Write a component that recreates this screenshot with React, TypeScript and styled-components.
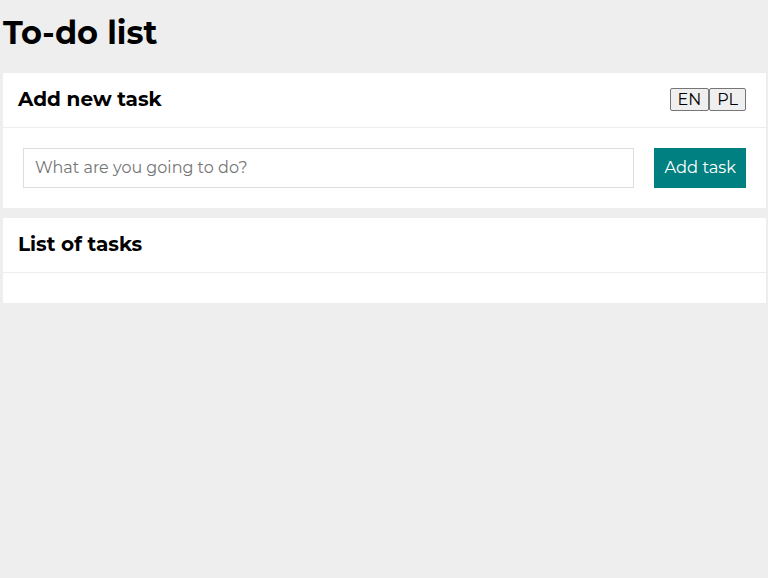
import React from "react";
import styled, { createGlobalStyle } from "styled-components";

const Global = createGlobalStyle`
  html, body { margin: 0; padding: 0; background: #eeeeee; }
  body { font-family: Montserrat, Inter, "DejaVu Sans", sans-serif; color: #000; }
  * { box-sizing: border-box; }
`;

const Page = styled.main`
  padding: 0 2px 0 3px;
  display: flex;
  flex-direction: column;
  gap: 10px;
`;

const Title = styled.h1`
  margin: 13px 0 10px;
  font-size: 32px;
  line-height: 40px;
  font-weight: 700;
`;

const Section = styled.section`
  background: #fff;
  display: flex;
  flex-direction: column;
`;

const SectionHeader = styled.header`
  display: flex;
  align-items: center;
  justify-content: space-between;
  height: 55px;
  padding: 0 20px 2px 15px;
  border-bottom: 1px solid #eeeeee;
`;

const SectionTitle = styled.h2`
  margin: 0;
  font-size: 20px;
  font-weight: 700;
  line-height: 24px;
`;

const LangGroup = styled.div`
  display: flex;
`;

const LangButton = styled.button`
  font-family: inherit;
  font-size: 16px;
  line-height: 19px;
  height: 23px;
  padding: 0 7px;
  background: #efefef;
  color: #000;
  border: 1px solid #767676;
  border-radius: 2px;
  cursor: pointer;
`;

const SectionBody = styled.div<{ $empty?: boolean }>`
  padding: ${(p) => (p.$empty ? "15px" : "20px")};
`;

const Form = styled.form`
  display: flex;
  gap: 20px;
`;

const Input = styled.input`
  flex: 1;
  height: 40px;
  padding: 0 11px 1px;
  border: 1px solid #dddddd;
  font-family: inherit;
  font-size: 16px;
  outline: none;
  &::placeholder { color: #757575; }
`;

const AddButton = styled.button`
  height: 40px;
  padding: 0 10px 2px;
  background: #008080;
  color: #fff;
  border: none;
  font-family: inherit;
  font-size: 16.3px;
  cursor: pointer;
`;

export default function App() {
  return (
    <>
      <Global />
      <Page>
        <Title>To-do list</Title>
        <Section>
          <SectionHeader>
            <SectionTitle>Add new task</SectionTitle>
            <LangGroup>
              <LangButton>EN</LangButton>
              <LangButton>PL</LangButton>
            </LangGroup>
          </SectionHeader>
          <SectionBody>
            <Form onSubmit={(e) => e.preventDefault()}>
              <Input placeholder="What are you going to do?" />
              <AddButton type="submit">Add task</AddButton>
            </Form>
          </SectionBody>
        </Section>
        <Section>
          <SectionHeader>
            <SectionTitle>List of tasks</SectionTitle>
          </SectionHeader>
          <SectionBody $empty />
        </Section>
      </Page>
    </>
  );
}
